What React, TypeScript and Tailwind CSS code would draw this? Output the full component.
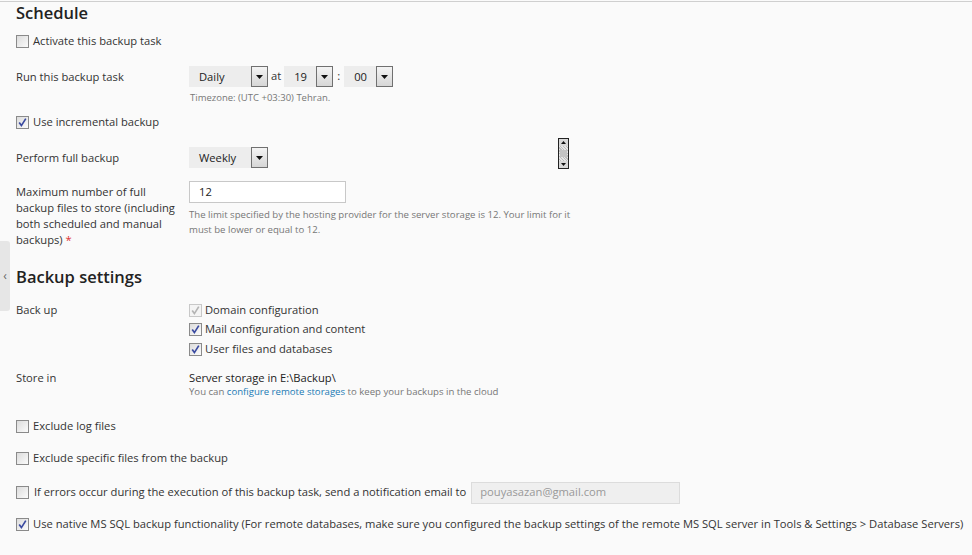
import React from "react";

const font = { fontFamily: '"Open Sans", "Noto Sans", sans-serif' };

function CheckBox({ checked = false, disabled = false }: { checked?: boolean; disabled?: boolean }) {
  return (
    <span
      className={`relative inline-flex h-[13px] w-[13px] shrink-0 items-center justify-center border ${
        disabled ? "border-[#c8c8c8] bg-[#f4f4f4]" : "border-[#8a8a8a] bg-gradient-to-br from-[#dcdcdc] to-[#fbfbfb]"
      }`}
    >
      {checked && (
        <svg width="11" height="11" viewBox="0 0 11 11">
          <path
            d="M2.2 5.6 L4.4 8.6 L8.8 1.6"
            fill="none"
            stroke={disabled ? "#b4b4b4" : "#3a4aa0"}
            strokeWidth="1.7"
          />
        </svg>
      )}
    </span>
  );
}

function Select({ value, w }: { value: string; w: string }) {
  return (
    <div className={`flex h-[21px] ${w} items-stretch bg-[#ededed]`}>
      <span className="flex-1 pl-[10px] leading-[21px] text-[#222]">{value}</span>
      <span className="flex w-[17px] items-center justify-center border border-[#707070] bg-gradient-to-b from-[#f4f4f4] to-[#d6d6d6]">
        <svg width="7" height="4" viewBox="0 0 7 4">
          <path d="M0 0 H7 L3.5 4 Z" fill="#111" />
        </svg>
      </span>
    </div>
  );
}

function CheckRow({ checked, children, mt }: { checked?: boolean; children: React.ReactNode; mt: string }) {
  return (
    <div className={`flex h-[20px] items-center gap-[4px] ${mt}`}>
      <CheckBox checked={checked} />
      <span>{children}</span>
    </div>
  );
}

export default function App() {
  return (
    <div className="relative h-[555px] w-[972px] overflow-hidden bg-[#fafafa] text-[11.2px] text-[#333]" style={font}>
      <div className="mt-px border-t border-[#cfcfcf]" />

      {/* collapsed side tab */}
      <div className="absolute left-0 top-[241px] flex h-[70px] w-[10px] items-center justify-center rounded-r-[3px] bg-[#e6e6e6] text-[12px] text-[#666]">
        ‹
      </div>

      <div className="pl-[16px]">
        <h2 className="-mt-[1px] h-[24px] text-[16.5px] font-semibold leading-[24px] text-[#222]">Schedule</h2>

        <CheckRow mt="mt-[6px]">Activate this backup task</CheckRow>

        <div className="mt-[15px] flex h-[21px] items-center">
          <span className="w-[173px] pt-px">Run this backup task</span>
          <Select value="Daily" w="w-[79px]" />
          <span className="mx-[3px]">at</span>
          <Select value="19" w="w-[49px]" />
          <span className="mx-[4px]">:</span>
          <Select value="00" w="w-[49px]" />
        </div>
        <div className="ml-[174px] mt-[5px] h-[12px] text-[9.5px] leading-[12px] text-[#777]">
          Timezone: (UTC +03:30) Tehran.
        </div>

        <CheckRow checked mt="mt-[8px]">Use incremental backup</CheckRow>

        <div className="mt-[15px] flex h-[21px] items-center">
          <span className="w-[173px] pt-px">Perform full backup</span>
          <Select value="Weekly" w="w-[79px]" />
          <div className="-mt-[8px] ml-[290px] flex h-[31px] w-[11px] flex-col border border-[#222] bg-[#c8c8c8]">
            <div className="flex h-[7px] items-center justify-center bg-[#d8d8d8]">
              <svg width="5" height="3" viewBox="0 0 5 3"><path d="M0 3 H5 L2.5 0 Z" fill="#111" /></svg>
            </div>
            <div className="flex-1 bg-[repeating-linear-gradient(45deg,#e6e6e6_0_1px,#bdbdbd_1px_2px)] px-px py-[4px]">
              <div className="h-full bg-[#c4c4c4]" />
            </div>
            <div className="flex h-[7px] items-center justify-center bg-[#d8d8d8]">
              <svg width="5" height="3" viewBox="0 0 5 3"><path d="M0 0 H5 L2.5 3 Z" fill="#111" /></svg>
            </div>
          </div>
        </div>

        <div className="mt-[13px] flex">
          <div className="w-[173px] pt-[3px]">
            <div className="w-[167px] leading-[16px]">
              Maximum number of full backup files to store (including both scheduled and manual backups)
              <span className="text-[#d33]">&nbsp;*</span>
            </div>
          </div>
          <div>
            <div className="flex h-[22px] w-[157px] items-center border border-[#c8c8c8] bg-white pl-[9px] text-[#222]">12</div>
            <div className="mt-[4px] w-[395px] text-[9.6px] leading-[15px] text-[#777]">
              The limit specified by the hosting provider for the server storage is 12. Your limit for it must be lower
              or equal to 12.
            </div>
          </div>
        </div>

        <h2 className="mt-[17px] h-[24px] text-[16.5px] font-semibold leading-[24px] text-[#222]">Backup settings</h2>

        <div className="mt-[11px] flex">
          <span className="w-[173px] leading-[20px]">Back up</span>
          <div className="flex flex-col">
            <div className="flex h-[20px] items-center gap-[3px]">
              <CheckBox checked disabled />
              <span>Domain configuration</span>
            </div>
            <div className="flex h-[19px] items-center gap-[3px]">
              <CheckBox checked />
              <span>Mail configuration and content</span>
            </div>
            <div className="flex h-[20px] items-center gap-[3px]">
              <CheckBox checked />
              <span>User files and databases</span>
            </div>
          </div>
        </div>

        <div className="mt-[11px] flex">
          <span className="w-[173px] leading-[16px]">Store in</span>
          <div>
            <div className="leading-[16px] text-[#222]">Server storage in E:\Backup\</div>
            <div className="h-[12px] text-[9.6px] leading-[12px] text-[#777]">
              You can <span className="text-[#1a7ab5]">configure remote storages</span> to keep your backups in the cloud
            </div>
          </div>
        </div>

        <CheckRow mt="mt-[18px]">Exclude log files</CheckRow>
        <CheckRow mt="mt-[12px]">Exclude specific files from the backup</CheckRow>

        <div className="mt-[14px] flex h-[21px] items-center">
          <CheckBox />
          <span className="ml-[5px]">If errors occur during the execution of this backup task, send a notification email to</span>
          <div className="ml-[5px] flex h-[22px] w-[209px] items-center border border-[#dcdcdc] bg-[#efefef] pl-[8px] text-[#999]">
            pouyasazan@gmail.com
          </div>
        </div>

        <CheckRow checked mt="mt-[11px]">
          Use native MS SQL backup functionality (For remote databases, make sure you configured the backup settings of the
          remote MS SQL server in Tools &amp; Settings &gt; Database Servers)
        </CheckRow>
      </div>
    </div>
  );
}
